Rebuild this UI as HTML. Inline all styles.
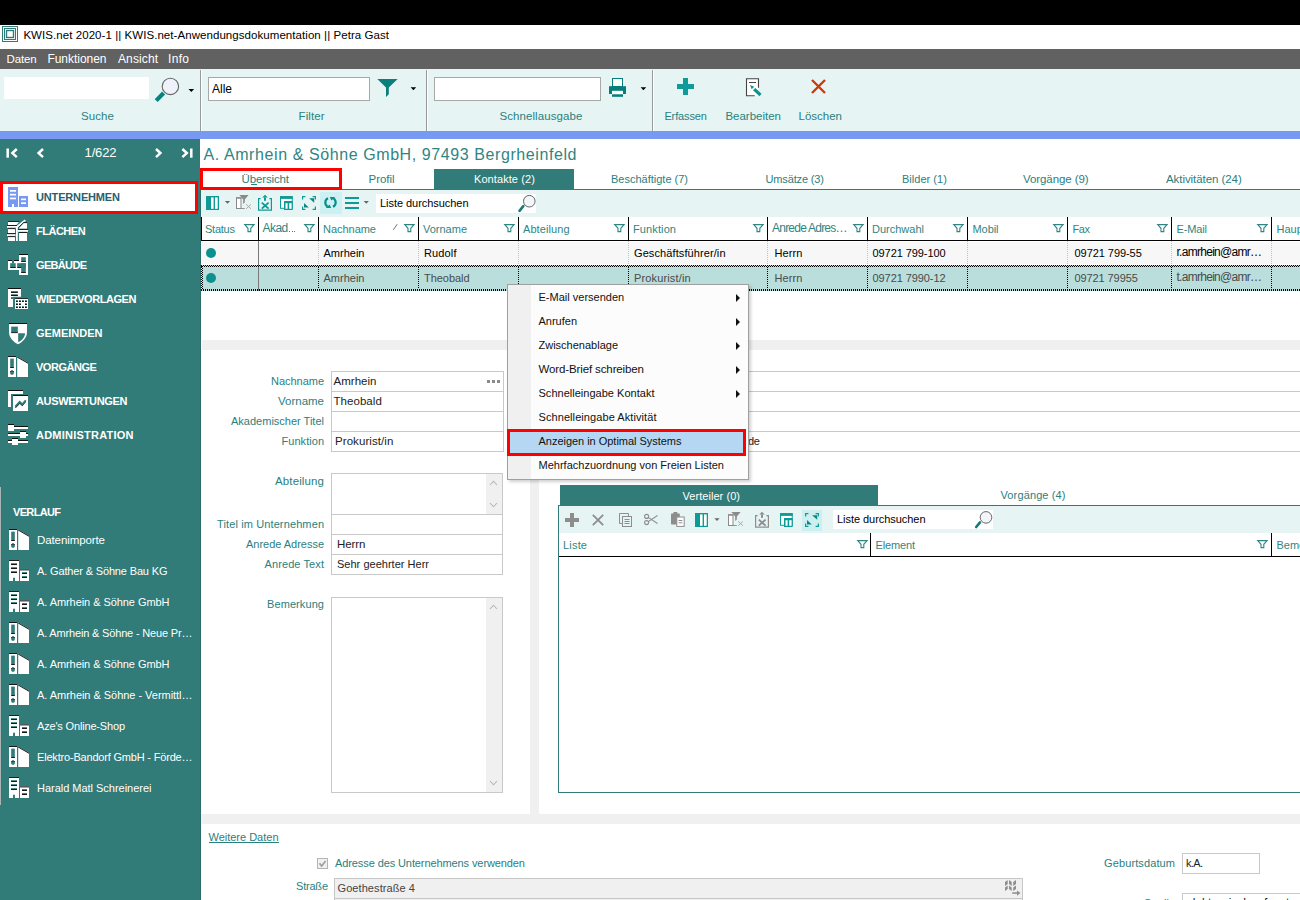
<!DOCTYPE html>
<html><head><meta charset="utf-8">
<style>
*{box-sizing:border-box;margin:0;padding:0}
html,body{width:1300px;height:900px;overflow:hidden;background:#fff}
body{font-family:"Liberation Sans",sans-serif;font-size:12px;color:#000;position:relative}
.a{position:absolute;white-space:nowrap}
.t{position:absolute;white-space:pre}
svg{overflow:visible}
</style></head><body>
<div class="a" style="left:0px;top:0px;width:1300px;height:25px;background:#000;"></div>
<div class="a" style="left:0px;top:25px;width:1300px;height:24px;background:#fff;"></div>
<svg class="a" style="left:2px;top:26px" width="16" height="16" viewBox="0 0 16 16"><rect x="0.5" y="0.5" width="15" height="15" fill="#fff" stroke="#317b78" stroke-width="1"/><rect x="2.5" y="2.5" width="11" height="11" fill="none" stroke="#317b78" stroke-width="1"/><rect x="4.5" y="4.5" width="7" height="7" fill="none" stroke="#317b78" stroke-width="1.4"/></svg>
<div class="t" style="left:23.4px;top:25px;font-size:11.5px;line-height:20px;color:#000;letter-spacing:0.062px;">KWIS.net 2020-1 || KWIS.net-Anwendungsdokumentation || Petra Gast</div>
<div class="a" style="left:0px;top:49px;width:1300px;height:20px;background:#616161;"></div>
<div class="t" style="left:6.5px;top:49px;font-size:11.5px;line-height:20px;color:#fff;letter-spacing:-0.149px;">Daten</div>
<div class="t" style="left:47.4px;top:49px;font-size:12px;line-height:20px;color:#fff;letter-spacing:-0.031px;">Funktionen</div>
<div class="t" style="left:118px;top:49px;font-size:12px;line-height:20px;color:#fff;letter-spacing:0.107px;">Ansicht</div>
<div class="t" style="left:168px;top:49px;font-size:12px;line-height:20px;color:#fff;letter-spacing:0.328px;">Info</div>
<div class="a" style="left:0px;top:69px;width:1300px;height:62px;background:#e6f5f4;"></div>
<div class="a" style="left:4px;top:77px;width:145px;height:22px;background:#fff;"></div>
<svg class="a" style="left:0px;top:0px" width="1" height="1" viewBox="0 0 1 1"><line x1="163.6" y1="93" x2="156.2" y2="100.6" stroke="#06837f" stroke-width="4.2" stroke-linecap="butt"/><circle cx="170.4" cy="86.4" r="8.2" fill="#eff2fa" stroke="#666" stroke-width="1.1"/></svg>
<svg class="a" style="left:0px;top:0px" width="1" height="1" viewBox="0 0 1 1"><path d="M188.5 88.89999999999999 h5.6 l-2.8 3 z" fill="#000"/></svg>
<div class="t" style="left:81px;top:106px;font-size:11.5px;line-height:20px;color:#2b807e;letter-spacing:0.097px;">Suche</div>
<div class="a" style="left:200px;top:70px;width:1px;height:61px;background:#9a9a9a;"></div>
<div class="a" style="left:201px;top:70px;width:1px;height:61px;background:#fff;"></div>
<div class="a" style="left:208px;top:77px;width:162px;height:24px;background:#fff;border:1px solid #a8a8a8;"></div>
<div class="t" style="left:212px;top:79px;font-size:12px;line-height:20px;color:#000;letter-spacing:-0.005px;">Alle</div>
<svg class="a" style="left:377px;top:79px" width="21" height="18" viewBox="0 0 21 18"><path d="M0.3 0 H20.7 L11.8 8.5 V15.3 L9 18 V8.5 Z" fill="#0b7f7c"/></svg>
<svg class="a" style="left:0px;top:0px" width="1" height="1" viewBox="0 0 1 1"><path d="M410.59999999999997 87.19999999999999 h5.6 l-2.8 3 z" fill="#000"/></svg>
<div class="t" style="left:298.6px;top:106px;font-size:11.5px;line-height:20px;color:#2b807e;letter-spacing:0.088px;">Filter</div>
<div class="a" style="left:426px;top:70px;width:1px;height:61px;background:#9a9a9a;"></div>
<div class="a" style="left:427px;top:70px;width:1px;height:61px;background:#fff;"></div>
<div class="a" style="left:434px;top:77px;width:167px;height:24px;background:#fff;border:1px solid #a8a8a8;"></div>
<svg class="a" style="left:609px;top:78px" width="17" height="19" viewBox="0 0 17 19"><rect x="3.5" y="0.5" width="10" height="8" fill="#fff" stroke="#067f7c" stroke-width="1"/><rect x="0" y="8.2" width="17" height="7.8" fill="#067f7c"/><rect x="3" y="12.8" width="11" height="3.4" fill="#fff"/><rect x="3" y="16.3" width="11" height="2.5" fill="#067f7c"/></svg>
<svg class="a" style="left:0px;top:0px" width="1" height="1" viewBox="0 0 1 1"><path d="M640.6 87.19999999999999 h5.6 l-2.8 3 z" fill="#000"/></svg>
<div class="t" style="left:499.4px;top:106px;font-size:11.5px;line-height:20px;color:#2b807e;letter-spacing:0.089px;">Schnellausgabe</div>
<div class="a" style="left:652px;top:70px;width:1px;height:61px;background:#9a9a9a;"></div>
<div class="a" style="left:653px;top:70px;width:1px;height:61px;background:#fff;"></div>
<svg class="a" style="left:677px;top:78px" width="17" height="17" viewBox="0 0 17 17"><path d="M6 0 h5 v6 h6 v5 h-6 v6 h-5 v-6 h-6 v-5 h6 z" fill="#0f9b97"/></svg>
<div class="t" style="left:664.4px;top:106px;font-size:11px;line-height:20px;color:#2b807e;letter-spacing:-0.116px;">Erfassen</div>
<svg class="a" style="left:745px;top:77px" width="18" height="20" viewBox="0 0 18 20"><rect x="1.5" y="1.7" width="12" height="17" fill="#fff"/><path d="M13.5 10.7 V1.7 H1.5 V18.7 H9.7" fill="none" stroke="#444" stroke-width="1.1"/><path d="M4 5.5 H11" stroke="#444" stroke-width="1"/><path d="M5 8 L9.2 9.7 L6.7 12.3 Z" fill="#0a9490"/><path d="M10.3 11 L8 13.3 L14.5 19.2 L16.5 16.7 Z" fill="#0a9490"/></svg>
<div class="t" style="left:725.4px;top:106px;font-size:11.5px;line-height:20px;color:#2b807e;letter-spacing:-0.003px;">Bearbeiten</div>
<svg class="a" style="left:811px;top:79px" width="15" height="15" viewBox="0 0 15 15"><path d="M1 1 L14 14 M14 1 L1 14" stroke="#cc3a0a" stroke-width="2.4" stroke-linecap="butt"/></svg>
<div class="t" style="left:798.6px;top:106px;font-size:11.5px;line-height:20px;color:#2b807e;letter-spacing:-0.014px;">Löschen</div>
<div class="a" style="left:0px;top:131px;width:1300px;height:8px;background:#7799f1;"></div>
<div class="a" style="left:0px;top:139px;width:200px;height:761px;background:#317b78;"></div>
<svg class="a" style="left:0px;top:139px" width="200" height="30" viewBox="0 0 200 30"><g stroke="#fff" stroke-width="2.5" fill="none" stroke-linecap="butt" stroke-linejoin="miter">
<path d="M7.7 9.5 V18.7"/><path d="M16.8 10 L12.4 14.1 L16.8 18.2"/>
<path d="M43 10 L38.6 14.1 L43 18.2"/>
<path d="M156 10 L160.4 14.1 L156 18.2"/>
<path d="M182.4 10 L186.8 14.1 L182.4 18.2"/><path d="M191.3 9.5 V18.7"/></g></svg>
<div class="t" style="left:84.6px;top:143px;font-size:13px;line-height:20px;color:#fff;letter-spacing:-0.162px;">1/622</div>
<div class="a" style="left:0px;top:181px;width:198px;height:33px;background:#fff;border:3px solid #ff0000;"></div>
<svg class="a" style="left:8px;top:187px" width="20" height="20" viewBox="0 0 20 20" preserveAspectRatio="none"><path d="M0 0 H10 V20 H6 V17 H4 V20 H0 Z M11 9 H20 V20 H11 Z" fill="#7799f1"/><g fill="#fff"><rect x="2" y="3" width="6" height="1.7"/><rect x="2" y="6.8" width="6" height="1.7"/><rect x="2" y="10.6" width="6" height="1.7"/><rect x="13" y="11.5" width="5" height="1.7"/><rect x="13" y="15.3" width="5" height="1.7"/></g></svg>
<div class="t" style="left:36px;top:187px;font-size:11px;line-height:20px;color:#29606c;font-weight:bold;letter-spacing:-0.156px;">UNTERNEHMEN</div>
<svg class="a" style="left:7px;top:220px" width="21" height="21" viewBox="0 0 21 21"><g fill="#fff"><path d="M1 1.4 H12.3 L9.5 5 H1 Z"/><rect x="0" y="5.9" width="10.3" height="1.8"/><rect x="1" y="8.6" width="7" height="4.6"/><rect x="0" y="14.1" width="8.5" height="1.8"/><rect x="1" y="16.6" width="7" height="4.4"/><rect x="9" y="7" width="1.8" height="14"/><path d="M12 8.8 V8 L17 2.8 H20 V8.8 Z"/><rect x="11" y="10" width="10" height="1.8"/><rect x="12" y="12.8" width="8" height="8.2"/></g><path d="M9.8 7 L18.3 0.2" stroke="#fff" stroke-width="1.9" fill="none"/><g fill="#111"><rect x="1" y="1" width="11.3" height="0.9"/><rect x="0" y="5" width="10" height="0.9"/><rect x="1" y="8.2" width="7" height="0.9"/><rect x="0" y="13.2" width="8.5" height="0.9"/><rect x="1" y="16.2" width="7" height="0.9"/><rect x="17" y="2.2" width="3" height="0.9"/><rect x="11.2" y="8.9" width="9.6" height="0.9"/><rect x="12" y="12" width="8" height="0.9"/></g><path d="M11.7 7.4 L17.2 2" stroke="#111" stroke-width="0.9" fill="none"/></svg>
<div class="t" style="left:36px;top:221px;font-size:11px;line-height:20px;color:#fff;font-weight:bold;letter-spacing:-0.494px;">FLÄCHEN</div>
<svg class="a" style="left:8px;top:254px" width="20" height="21" viewBox="0 0 20 21"><path d="M11 0 H20 V21 H11 V16 H0 V6 H11 Z" fill="#fff"/><g fill="#317b78"><rect x="4" y="6" width="2" height="3.4"/><rect x="13.2" y="3.2" width="4.6" height="4.6"/><rect x="2.2" y="9.2" width="5.5" height="4.6"/><rect x="9.2" y="9.2" width="8.6" height="4.6"/><rect x="13.2" y="9.2" width="4.6" height="9.6"/></g><g fill="#111"><rect x="11" y="0" width="9" height="1"/><rect x="0" y="6" width="4" height="1"/><rect x="6" y="6" width="5" height="1"/><rect x="13.2" y="7" width="4.6" height="0.9"/><rect x="2.2" y="13" width="5.5" height="0.9"/><rect x="9.2" y="13" width="4" height="0.9"/><rect x="13.2" y="18" width="4.6" height="0.9"/></g></svg>
<div class="t" style="left:36px;top:255px;font-size:11px;line-height:20px;color:#fff;font-weight:bold;letter-spacing:-0.669px;">GEBÄUDE</div>
<svg class="a" style="left:8px;top:288px" width="20" height="21" viewBox="0 0 20 21"><path d="M0 0 H13 V8.8 H5 V19 H0 Z" fill="#fff"/><rect x="7" y="10" width="13" height="11" fill="#fff"/><g fill="#317b78"><rect x="3" y="3.2" width="6.8" height="1.7"/><rect x="3" y="6.3" width="6.8" height="1.7"/><rect x="8" y="12.2" width="1.8" height="1.8"/><rect x="8" y="15.2" width="1.8" height="1.8"/><rect x="8" y="18.2" width="1.8" height="1.8"/><rect x="11" y="12.2" width="1.8" height="1.8"/><rect x="11" y="15.2" width="1.8" height="1.8"/><rect x="11" y="18.2" width="1.8" height="1.8"/><rect x="14" y="12.2" width="1.8" height="1.8"/><rect x="14" y="18.2" width="1.8" height="1.8"/><rect x="17" y="12.2" width="1.8" height="1.8"/><rect x="17" y="15.2" width="1.8" height="1.8"/><rect x="17" y="18.2" width="1.8" height="1.8"/></g><g fill="#111"><rect x="0" y="0" width="13" height="1"/><rect x="7" y="10" width="13" height="0.9"/><rect x="3" y="3.8" width="6.8" height="1.1"/><rect x="3" y="6.9" width="6.8" height="1.1"/><rect x="3" y="9.4" width="2" height="1.3"/><rect x="8" y="12.9" width="1.8" height="1.1"/><rect x="8" y="15.9" width="1.8" height="1.1"/><rect x="8" y="18.9" width="1.8" height="1.1"/><rect x="11" y="12.9" width="1.8" height="1.1"/><rect x="11" y="15.9" width="1.8" height="1.1"/><rect x="11" y="18.9" width="1.8" height="1.1"/><rect x="14" y="12.9" width="1.8" height="1.1"/><rect x="14" y="18.9" width="1.8" height="1.1"/><rect x="17" y="12.9" width="1.8" height="1.1"/><rect x="17" y="15.9" width="1.8" height="1.1"/><rect x="17" y="18.9" width="1.8" height="1.1"/></g></svg>
<div class="t" style="left:36px;top:289px;font-size:11px;line-height:20px;color:#fff;font-weight:bold;letter-spacing:-0.442px;">WIEDERVORLAGEN</div>
<svg class="a" style="left:9px;top:323px" width="18" height="22" viewBox="0 0 18 22"><path d="M0 0.5 H18 V9 C18 15 13 19.3 9 21.3 C5 19.3 0 15 0 9 Z" fill="#fff"/><rect x="0" y="0" width="18" height="1" fill="#111"/><rect x="2.2" y="3.6" width="6.6" height="6" fill="#317b78"/><rect x="2.2" y="9.2" width="6.6" height="0.9" fill="#111"/><path d="M9.2 10.2 H16 C16 14 13 17.5 9.2 19.2 Z" fill="#317b78"/></svg>
<div class="t" style="left:36px;top:323px;font-size:11px;line-height:20px;color:#fff;font-weight:bold;letter-spacing:-0.016px;">GEMEINDEN</div>
<svg class="a" style="left:8px;top:356px" width="20" height="21" viewBox="0 0 20 20" preserveAspectRatio="none"><path d="M0 0.5 H8 V20 H0 Z M9.2 0.5 L20 6.5 V20 H9.2 Z" fill="#fff"/><rect x="0" y="0" width="8" height="0.9" fill="#111"/><path d="M9.2 0.5 L20 6.5 L20 7.4 L9.2 1.4 Z" fill="#111"/><rect x="2.2" y="2.5" width="3.6" height="8.5" fill="#317b78"/><rect x="2.2" y="10.5" width="3.6" height="0.9" fill="#111"/><circle cx="4" cy="16" r="2" fill="#317b78"/><path d="M2.2 15.2 A2 2 0 0 1 5.8 15.2" fill="none" stroke="#111" stroke-width="0.8"/></svg>
<div class="t" style="left:36px;top:357px;font-size:11px;line-height:20px;color:#fff;font-weight:bold;letter-spacing:-0.484px;">VORGÄNGE</div>
<svg class="a" style="left:8px;top:390px" width="20" height="21" viewBox="0 0 20 21"><path d="M0 0 H15 V4 H3 V17 H0 Z" fill="#fff"/><rect x="5" y="5" width="15" height="16" fill="#fff"/><g fill="#111"><rect x="0" y="0" width="15" height="1"/><rect x="5" y="5" width="15" height="1"/></g><path d="M7.4 17.6 L11.7 13 L14.3 15.4 L17.7 11.4" fill="none" stroke="#222" stroke-width="1.2"/><path d="M7.2 16.5 L11.7 11.8 L14.3 14.3 L17.7 10.2" fill="none" stroke="#317b78" stroke-width="1.8"/></svg>
<div class="t" style="left:36px;top:391px;font-size:11px;line-height:20px;color:#fff;font-weight:bold;letter-spacing:-0.359px;">AUSWERTUNGEN</div>
<svg class="a" style="left:8px;top:424px" width="20" height="21" viewBox="0 0 20 21"><g fill="#fff"><rect x="0" y="0" width="6" height="7"/><rect x="6" y="2" width="14" height="3"/><rect x="12" y="7" width="6" height="7"/><rect x="0" y="9" width="20" height="3"/><rect x="4" y="14" width="6" height="7"/><rect x="0" y="16" width="20" height="3"/></g><g fill="#111"><rect x="0" y="0" width="6" height="1"/><rect x="6" y="2" width="14" height="1"/><rect x="12" y="7" width="6" height="1"/><rect x="0" y="9" width="12" height="1"/><rect x="18" y="9" width="2" height="1"/><rect x="4" y="14" width="6" height="1"/><rect x="0" y="16" width="4" height="1"/><rect x="10" y="16" width="10" height="1"/></g></svg>
<div class="t" style="left:36px;top:425px;font-size:11px;line-height:20px;color:#fff;font-weight:bold;letter-spacing:0.230px;">ADMINISTRATION</div>
<div class="a" style="left:0px;top:487px;width:1px;height:318px;background:#a9b4b4;"></div>
<div class="t" style="left:13px;top:502px;font-size:11px;line-height:20px;color:#fff;font-weight:bold;letter-spacing:-0.659px;">VERLAUF</div>
<svg class="a" style="left:9px;top:529px" width="20" height="21" viewBox="0 0 20 20" preserveAspectRatio="none"><path d="M0 0.5 H8 V20 H0 Z M9.2 0.5 L20 6.5 V20 H9.2 Z" fill="#fff"/><rect x="0" y="0" width="8" height="0.9" fill="#111"/><path d="M9.2 0.5 L20 6.5 L20 7.4 L9.2 1.4 Z" fill="#111"/><rect x="2.2" y="2.5" width="3.6" height="8.5" fill="#317b78"/><rect x="2.2" y="10.5" width="3.6" height="0.9" fill="#111"/><circle cx="4" cy="16" r="2" fill="#317b78"/><path d="M2.2 15.2 A2 2 0 0 1 5.8 15.2" fill="none" stroke="#111" stroke-width="0.8"/></svg>
<div class="t" style="left:37px;top:530px;font-size:11.5px;line-height:20px;color:#fff;letter-spacing:-0.095px;">Datenimporte</div>
<svg class="a" style="left:9px;top:560px" width="20" height="21" viewBox="0 0 20 20" preserveAspectRatio="none"><path d="M0 0 H10 V20 H6 V17 H4 V20 H0 Z M11 9 H20 V20 H11 Z" fill="#fff"/><g fill="#317b78"><rect x="2" y="3" width="6" height="1.7"/><rect x="2" y="6.8" width="6" height="1.7"/><rect x="2" y="10.6" width="6" height="1.7"/><rect x="13" y="11.5" width="5" height="1.7"/><rect x="13" y="15.3" width="5" height="1.7"/></g><g fill="#111"><rect x="0" y="0" width="10" height="0.9"/><rect x="11" y="9" width="9" height="0.9"/><rect x="2" y="3.9" width="6" height="0.9"/><rect x="2" y="7.7" width="6" height="0.9"/><rect x="2" y="11.5" width="6" height="0.9"/><rect x="13" y="12.4" width="5" height="0.9"/><rect x="13" y="16.2" width="5" height="0.9"/></g></svg>
<div class="t" style="left:37px;top:561px;font-size:11px;line-height:20px;color:#fff;letter-spacing:-0.149px;">A. Gather &amp; Söhne Bau KG</div>
<svg class="a" style="left:9px;top:591px" width="20" height="21" viewBox="0 0 20 20" preserveAspectRatio="none"><path d="M0 0 H10 V20 H6 V17 H4 V20 H0 Z M11 9 H20 V20 H11 Z" fill="#fff"/><g fill="#317b78"><rect x="2" y="3" width="6" height="1.7"/><rect x="2" y="6.8" width="6" height="1.7"/><rect x="2" y="10.6" width="6" height="1.7"/><rect x="13" y="11.5" width="5" height="1.7"/><rect x="13" y="15.3" width="5" height="1.7"/></g><g fill="#111"><rect x="0" y="0" width="10" height="0.9"/><rect x="11" y="9" width="9" height="0.9"/><rect x="2" y="3.9" width="6" height="0.9"/><rect x="2" y="7.7" width="6" height="0.9"/><rect x="2" y="11.5" width="6" height="0.9"/><rect x="13" y="12.4" width="5" height="0.9"/><rect x="13" y="16.2" width="5" height="0.9"/></g></svg>
<div class="t" style="left:37px;top:592px;font-size:11px;line-height:20px;color:#fff;letter-spacing:-0.064px;">A. Amrhein &amp; Söhne GmbH</div>
<svg class="a" style="left:9px;top:622px" width="20" height="21" viewBox="0 0 20 20" preserveAspectRatio="none"><path d="M0 0.5 H8 V20 H0 Z M9.2 0.5 L20 6.5 V20 H9.2 Z" fill="#fff"/><rect x="0" y="0" width="8" height="0.9" fill="#111"/><path d="M9.2 0.5 L20 6.5 L20 7.4 L9.2 1.4 Z" fill="#111"/><rect x="2.2" y="2.5" width="3.6" height="8.5" fill="#317b78"/><rect x="2.2" y="10.5" width="3.6" height="0.9" fill="#111"/><circle cx="4" cy="16" r="2" fill="#317b78"/><path d="M2.2 15.2 A2 2 0 0 1 5.8 15.2" fill="none" stroke="#111" stroke-width="0.8"/></svg>
<div class="t" style="left:37px;top:623px;font-size:11px;line-height:20px;color:#fff;letter-spacing:-0.167px;">A. Amrhein &amp; Söhne - Neue Pr…</div>
<svg class="a" style="left:9px;top:653px" width="20" height="21" viewBox="0 0 20 20" preserveAspectRatio="none"><path d="M0 0.5 H8 V20 H0 Z M9.2 0.5 L20 6.5 V20 H9.2 Z" fill="#fff"/><rect x="0" y="0" width="8" height="0.9" fill="#111"/><path d="M9.2 0.5 L20 6.5 L20 7.4 L9.2 1.4 Z" fill="#111"/><rect x="2.2" y="2.5" width="3.6" height="8.5" fill="#317b78"/><rect x="2.2" y="10.5" width="3.6" height="0.9" fill="#111"/><circle cx="4" cy="16" r="2" fill="#317b78"/><path d="M2.2 15.2 A2 2 0 0 1 5.8 15.2" fill="none" stroke="#111" stroke-width="0.8"/></svg>
<div class="t" style="left:37px;top:654px;font-size:11px;line-height:20px;color:#fff;letter-spacing:-0.064px;">A. Amrhein &amp; Söhne GmbH</div>
<svg class="a" style="left:9px;top:684px" width="20" height="21" viewBox="0 0 20 20" preserveAspectRatio="none"><path d="M0 0.5 H8 V20 H0 Z M9.2 0.5 L20 6.5 V20 H9.2 Z" fill="#fff"/><rect x="0" y="0" width="8" height="0.9" fill="#111"/><path d="M9.2 0.5 L20 6.5 L20 7.4 L9.2 1.4 Z" fill="#111"/><rect x="2.2" y="2.5" width="3.6" height="8.5" fill="#317b78"/><rect x="2.2" y="10.5" width="3.6" height="0.9" fill="#111"/><circle cx="4" cy="16" r="2" fill="#317b78"/><path d="M2.2 15.2 A2 2 0 0 1 5.8 15.2" fill="none" stroke="#111" stroke-width="0.8"/></svg>
<div class="t" style="left:37px;top:685px;font-size:11px;line-height:20px;color:#fff;letter-spacing:-0.035px;">A. Amrhein &amp; Söhne - Vermittl…</div>
<svg class="a" style="left:9px;top:715px" width="20" height="21" viewBox="0 0 20 20" preserveAspectRatio="none"><path d="M0 0 H10 V20 H6 V17 H4 V20 H0 Z M11 9 H20 V20 H11 Z" fill="#fff"/><g fill="#317b78"><rect x="2" y="3" width="6" height="1.7"/><rect x="2" y="6.8" width="6" height="1.7"/><rect x="2" y="10.6" width="6" height="1.7"/><rect x="13" y="11.5" width="5" height="1.7"/><rect x="13" y="15.3" width="5" height="1.7"/></g><g fill="#111"><rect x="0" y="0" width="10" height="0.9"/><rect x="11" y="9" width="9" height="0.9"/><rect x="2" y="3.9" width="6" height="0.9"/><rect x="2" y="7.7" width="6" height="0.9"/><rect x="2" y="11.5" width="6" height="0.9"/><rect x="13" y="12.4" width="5" height="0.9"/><rect x="13" y="16.2" width="5" height="0.9"/></g></svg>
<div class="t" style="left:37px;top:716px;font-size:11px;line-height:20px;color:#fff;letter-spacing:-0.173px;">Aze's Online-Shop</div>
<svg class="a" style="left:9px;top:746px" width="20" height="21" viewBox="0 0 20 20" preserveAspectRatio="none"><path d="M0 0.5 H8 V20 H0 Z M9.2 0.5 L20 6.5 V20 H9.2 Z" fill="#fff"/><rect x="0" y="0" width="8" height="0.9" fill="#111"/><path d="M9.2 0.5 L20 6.5 L20 7.4 L9.2 1.4 Z" fill="#111"/><rect x="2.2" y="2.5" width="3.6" height="8.5" fill="#317b78"/><rect x="2.2" y="10.5" width="3.6" height="0.9" fill="#111"/><circle cx="4" cy="16" r="2" fill="#317b78"/><path d="M2.2 15.2 A2 2 0 0 1 5.8 15.2" fill="none" stroke="#111" stroke-width="0.8"/></svg>
<div class="t" style="left:37px;top:747px;font-size:11px;line-height:20px;color:#fff;letter-spacing:-0.188px;">Elektro-Bandorf GmbH - Förde…</div>
<svg class="a" style="left:9px;top:777px" width="20" height="21" viewBox="0 0 20 20" preserveAspectRatio="none"><path d="M0 0 H10 V20 H6 V17 H4 V20 H0 Z M11 9 H20 V20 H11 Z" fill="#fff"/><g fill="#317b78"><rect x="2" y="3" width="6" height="1.7"/><rect x="2" y="6.8" width="6" height="1.7"/><rect x="2" y="10.6" width="6" height="1.7"/><rect x="13" y="11.5" width="5" height="1.7"/><rect x="13" y="15.3" width="5" height="1.7"/></g><g fill="#111"><rect x="0" y="0" width="10" height="0.9"/><rect x="11" y="9" width="9" height="0.9"/><rect x="2" y="3.9" width="6" height="0.9"/><rect x="2" y="7.7" width="6" height="0.9"/><rect x="2" y="11.5" width="6" height="0.9"/><rect x="13" y="12.4" width="5" height="0.9"/><rect x="13" y="16.2" width="5" height="0.9"/></g></svg>
<div class="t" style="left:37px;top:778px;font-size:11px;line-height:20px;color:#fff;letter-spacing:-0.020px;">Harald Matl Schreinerei</div>
<div class="t" style="left:203.5px;top:145px;font-size:16px;line-height:20px;color:#2f8583;letter-spacing:0.587px;">A. Amrhein &amp; Söhne GmbH, 97493 Bergrheinfeld</div>
<div class="a" style="left:342px;top:189px;width:958px;height:1px;background:#317b78;"></div>
<div class="a" style="left:200px;top:168px;width:142px;height:22px;background:#fff;border:3px solid #ff0000;"></div>
<div class="t" style="left:241.5px;top:169px;font-size:11.5px;line-height:20px;color:#2b807e;letter-spacing:-0.134px;">Übersicht</div>
<div class="a" style="left:250.5px;top:184px;width:6.5px;height:1px;background:#2b807e;"></div>
<div class="t" style="left:368.5px;top:169px;font-size:11.5px;line-height:20px;color:#2b807e;letter-spacing:-0.041px;">Profil</div>
<div class="a" style="left:434px;top:169px;width:140px;height:21px;background:#317b78;"></div>
<div class="t" style="left:474px;top:169px;font-size:11px;line-height:20px;color:#fff;letter-spacing:0.079px;">Kontakte (2)</div>
<div class="t" style="left:611px;top:169px;font-size:11px;line-height:20px;color:#2b807e;letter-spacing:-0.003px;">Beschäftigte (7)</div>
<div class="t" style="left:765.5px;top:169px;font-size:11px;line-height:20px;color:#2b807e;letter-spacing:-0.140px;">Umsätze (3)</div>
<div class="t" style="left:902px;top:169px;font-size:11px;line-height:20px;color:#2b807e;letter-spacing:0.019px;">Bilder (1)</div>
<div class="t" style="left:1023px;top:169px;font-size:11.5px;line-height:20px;color:#2b807e;letter-spacing:-0.082px;">Vorgänge (9)</div>
<div class="t" style="left:1166px;top:169px;font-size:11.5px;line-height:20px;color:#2b807e;letter-spacing:-0.061px;">Aktivitäten (24)</div>
<div class="a" style="left:200px;top:190px;width:1px;height:710px;background:#2a6d6a;"></div>
<div class="a" style="left:201px;top:190px;width:1099px;height:27px;background:#e6f5f4;"></div>
<svg class="a" style="left:206px;top:196px" width="13" height="14" viewBox="0 0 13 14"><rect x="0" y="0" width="13" height="14" fill="#0e9a96"/><rect x="5" y="1.4" width="2.6" height="11.4" fill="#fff"/><rect x="9" y="1.4" width="2.7" height="11.4" fill="#fff"/></svg>
<svg class="a" style="left:0px;top:0px" width="1" height="1" viewBox="0 0 1 1"><path d="M224.9 200.89999999999998 h5.2 l-2.6 2.8 z" fill="#666"/></svg>
<svg class="a" style="left:236px;top:195px" width="16" height="14" viewBox="0 0 16 14"><rect x="0.5" y="2.8" width="4.5" height="10.7" fill="#fff" stroke="#8a8a8a" stroke-width="1"/><rect x="0" y="2.3" width="5.5" height="1.3" fill="#8a8a8a"/><rect x="0" y="13" width="8.8" height="0.9" fill="#8a8a8a"/><path d="M3.4 0 H12.6 L8.8 4.5 V7.5 L7.2 9 V4.5 Z" fill="#8a8a8a"/><path d="M10.2 9.3 L15 13.8 M15 9.3 L10.2 13.8" stroke="#ab9f9f" stroke-width="0.9"/></svg>
<svg class="a" style="left:258px;top:196px" width="14" height="15" viewBox="0 0 14 15"><path d="M2.6 2.6 H0.6 V14.1 H13.4 V2.6 H11.4" fill="none" stroke="#0e9a96" stroke-width="1.2"/><path d="M7 -1.2 L9.8 1.6 H4.2 Z" fill="#0e9a96"/><rect x="6" y="1.4" width="2" height="3.4" fill="#0e9a96"/><path d="M3.8 6.6 L10.6 12.6 M10.6 6.6 L3.8 12.6" stroke="#0e9a96" stroke-width="1.9"/></svg>
<svg class="a" style="left:280px;top:196px" width="13" height="14" viewBox="0 0 13 14"><rect x="0.5" y="0.7" width="11.7" height="11.6" fill="#fff" stroke="#0e9a96" stroke-width="1"/><rect x="0" y="0.2" width="12.7" height="2.7" fill="#0e9a96"/><rect x="4" y="5" width="8.7" height="9" fill="#0e9a96"/><rect x="5.5" y="7.2" width="2.1" height="5.6" fill="#fff"/><rect x="9.2" y="7.2" width="2.4" height="5.6" fill="#fff"/></svg>
<svg class="a" style="left:302px;top:196px" width="14" height="14" viewBox="0 0 14 14"><g fill="none" stroke="#0e9a96" stroke-width="1.2"><path d="M0.6 3.4 V0.6 H3.4"/><path d="M10.6 0.6 H13.4 V3.4"/><path d="M13.4 10.6 V13.4 H10.6"/><path d="M3.4 13.4 H0.6 V10.6"/></g><path d="M7.1 2.3 H12.2 V6.8 Z M2 7.1 V11.6 H6.8 Z" fill="#0a8783"/></svg>
<div class="a" style="left:320px;top:192px;width:22px;height:22px;background:#cdf0f2;"></div>
<svg class="a" style="left:0px;top:0px" width="1" height="1" viewBox="0 0 1 1"><g fill="none" stroke="#0a8f8b" stroke-width="2.2"><path d="M328 198.2 C324.6 199.8 324.4 204.6 327.6 206.6"/><path d="M333 206.8 C336.4 205.2 336.6 200.4 333.4 198.4"/></g><path d="M325.8 208 H331.2 L329.6 204.4 Z M335.2 197 H329.8 L331.4 200.6 Z" fill="#0a8f8b"/></svg>
<div class="a" style="left:345px;top:197px;width:14px;height:2px;background:#0e9a96;"></div>
<div class="a" style="left:345px;top:202px;width:14px;height:2px;background:#0e9a96;"></div>
<div class="a" style="left:345px;top:207px;width:14px;height:2px;background:#0e9a96;"></div>
<svg class="a" style="left:0px;top:0px" width="1" height="1" viewBox="0 0 1 1"><path d="M363.7 200.89999999999998 h5.2 l-2.6 2.8 z" fill="#666"/></svg>
<div class="a" style="left:376px;top:194px;width:160px;height:19px;background:#fff;"></div>
<div class="t" style="left:380px;top:193px;font-size:11px;line-height:20px;color:#000;letter-spacing:-0.049px;">Liste durchsuchen</div>
<svg class="a" style="left:0px;top:0px" width="1" height="1" viewBox="0 0 1 1"><line x1="523.3" y1="206.2" x2="519.5" y2="210.79999999999998" stroke="#157a78" stroke-width="2.6" stroke-linecap="round"/><circle cx="529.3" cy="201.2" r="5.8" fill="#f2f5fa" stroke="#666" stroke-width="1"/></svg>
<div class="a" style="left:201px;top:217px;width:1099px;height:24px;background:#fff;"></div>
<div class="a" style="left:201px;top:240px;width:1099px;height:1px;background:#000;"></div>
<div class="a" style="left:201px;top:217px;width:1px;height:24px;background:#000;"></div>
<div class="a" style="left:258px;top:217px;width:1px;height:24px;background:#000;"></div>
<div class="a" style="left:318px;top:217px;width:1px;height:24px;background:#000;"></div>
<div class="a" style="left:418px;top:217px;width:1px;height:24px;background:#000;"></div>
<div class="a" style="left:518px;top:217px;width:1px;height:24px;background:#000;"></div>
<div class="a" style="left:628px;top:217px;width:1px;height:24px;background:#000;"></div>
<div class="a" style="left:767px;top:217px;width:1px;height:24px;background:#000;"></div>
<div class="a" style="left:867px;top:217px;width:1px;height:24px;background:#000;"></div>
<div class="a" style="left:967px;top:217px;width:1px;height:24px;background:#000;"></div>
<div class="a" style="left:1067px;top:217px;width:1px;height:24px;background:#000;"></div>
<div class="a" style="left:1171px;top:217px;width:1px;height:24px;background:#000;"></div>
<div class="a" style="left:1271px;top:217px;width:1px;height:24px;background:#000;"></div>
<svg class="a" style="left:244px;top:223.7px" width="11" height="8" viewBox="0 0 11 8"><path d="M0.7 0.6 H10.1 L6.8 4.3 V7.6 H4 V4.3 Z" fill="none" stroke="#2f8583" stroke-width="1.1" stroke-linejoin="miter"/></svg>
<svg class="a" style="left:304px;top:223.7px" width="11" height="8" viewBox="0 0 11 8"><path d="M0.7 0.6 H10.1 L6.8 4.3 V7.6 H4 V4.3 Z" fill="none" stroke="#2f8583" stroke-width="1.1" stroke-linejoin="miter"/></svg>
<svg class="a" style="left:404px;top:223.7px" width="11" height="8" viewBox="0 0 11 8"><path d="M0.7 0.6 H10.1 L6.8 4.3 V7.6 H4 V4.3 Z" fill="none" stroke="#2f8583" stroke-width="1.1" stroke-linejoin="miter"/></svg>
<svg class="a" style="left:504px;top:223.7px" width="11" height="8" viewBox="0 0 11 8"><path d="M0.7 0.6 H10.1 L6.8 4.3 V7.6 H4 V4.3 Z" fill="none" stroke="#2f8583" stroke-width="1.1" stroke-linejoin="miter"/></svg>
<svg class="a" style="left:614px;top:223.7px" width="11" height="8" viewBox="0 0 11 8"><path d="M0.7 0.6 H10.1 L6.8 4.3 V7.6 H4 V4.3 Z" fill="none" stroke="#2f8583" stroke-width="1.1" stroke-linejoin="miter"/></svg>
<svg class="a" style="left:753px;top:223.7px" width="11" height="8" viewBox="0 0 11 8"><path d="M0.7 0.6 H10.1 L6.8 4.3 V7.6 H4 V4.3 Z" fill="none" stroke="#2f8583" stroke-width="1.1" stroke-linejoin="miter"/></svg>
<svg class="a" style="left:853px;top:223.7px" width="11" height="8" viewBox="0 0 11 8"><path d="M0.7 0.6 H10.1 L6.8 4.3 V7.6 H4 V4.3 Z" fill="none" stroke="#2f8583" stroke-width="1.1" stroke-linejoin="miter"/></svg>
<svg class="a" style="left:953px;top:223.7px" width="11" height="8" viewBox="0 0 11 8"><path d="M0.7 0.6 H10.1 L6.8 4.3 V7.6 H4 V4.3 Z" fill="none" stroke="#2f8583" stroke-width="1.1" stroke-linejoin="miter"/></svg>
<svg class="a" style="left:1053px;top:223.7px" width="11" height="8" viewBox="0 0 11 8"><path d="M0.7 0.6 H10.1 L6.8 4.3 V7.6 H4 V4.3 Z" fill="none" stroke="#2f8583" stroke-width="1.1" stroke-linejoin="miter"/></svg>
<svg class="a" style="left:1157px;top:223.7px" width="11" height="8" viewBox="0 0 11 8"><path d="M0.7 0.6 H10.1 L6.8 4.3 V7.6 H4 V4.3 Z" fill="none" stroke="#2f8583" stroke-width="1.1" stroke-linejoin="miter"/></svg>
<svg class="a" style="left:1257px;top:223.7px" width="11" height="8" viewBox="0 0 11 8"><path d="M0.7 0.6 H10.1 L6.8 4.3 V7.6 H4 V4.3 Z" fill="none" stroke="#2f8583" stroke-width="1.1" stroke-linejoin="miter"/></svg>
<div class="t" style="left:205px;top:219px;font-size:11px;line-height:20px;color:#2f8583;letter-spacing:-0.237px;">Status</div>
<div class="t" style="left:262.5px;top:218px;font-size:12px;line-height:20px;color:#2f8583;letter-spacing:-0.553px;">Akad</div>
<div class="t" style="left:323px;top:219px;font-size:11px;line-height:20px;color:#2f8583;letter-spacing:-0.029px;">Nachname</div>
<div class="t" style="left:423px;top:219px;font-size:11px;line-height:20px;color:#2f8583;letter-spacing:-0.005px;">Vorname</div>
<div class="t" style="left:523px;top:219px;font-size:11px;line-height:20px;color:#2f8583;letter-spacing:0.078px;">Abteilung</div>
<div class="t" style="left:633px;top:219px;font-size:11px;line-height:20px;color:#2f8583;letter-spacing:0.114px;">Funktion</div>
<div class="t" style="left:772px;top:218px;font-size:12px;line-height:20px;color:#2f8583;letter-spacing:-0.768px;">Anrede Adres…</div>
<div class="t" style="left:872px;top:219px;font-size:11px;line-height:20px;color:#2f8583;letter-spacing:0.004px;">Durchwahl</div>
<div class="t" style="left:972.5px;top:219px;font-size:11px;line-height:20px;color:#2f8583;letter-spacing:-0.074px;">Mobil</div>
<div class="t" style="left:1072.5px;top:219px;font-size:11px;line-height:20px;color:#2f8583;letter-spacing:-0.422px;">Fax</div>
<div class="t" style="left:1176.5px;top:219px;font-size:11px;line-height:20px;color:#2f8583;letter-spacing:-0.134px;">E-Mail</div>
<div class="t" style="left:1276.5px;top:219px;font-size:11px;line-height:20px;color:#2f8583;">Haupt</div>
<div class="a" style="left:289px;top:231px;width:1.2px;height:1px;background:#2f8583;"></div>
<div class="a" style="left:291.5px;top:231px;width:1.2px;height:1px;background:#2f8583;"></div>
<div class="a" style="left:294px;top:231px;width:1.2px;height:1px;background:#2f8583;"></div>
<svg class="a" style="left:393px;top:224px" width="5" height="6" viewBox="0 0 5 6"><path d="M0.3 5.8 L4.2 0.2" stroke="#777" stroke-width="1"/></svg>
<div class="a" style="left:201px;top:242px;width:1099px;height:22px;background:#f7f7f7;"></div>
<div class="a" style="left:202px;top:265px;width:1098px;height:26px;background:#b9dedb;"></div>
<div class="a" style="left:258px;top:241px;width:1px;height:50px;background:#7a7a7a;"></div>
<div class="a" style="left:318px;top:241px;width:1px;height:24px;background:repeating-linear-gradient(180deg,#c0c0c0 0 1px,transparent 1px 2px);background-position:0 0px"></div>
<div class="a" style="left:318px;top:267px;width:1px;height:22px;background:repeating-linear-gradient(180deg,#000 0 1px,transparent 1px 2px);background-position:0 0px"></div>
<div class="a" style="left:418px;top:241px;width:1px;height:24px;background:repeating-linear-gradient(180deg,#c0c0c0 0 1px,transparent 1px 2px);background-position:0 0px"></div>
<div class="a" style="left:418px;top:267px;width:1px;height:22px;background:repeating-linear-gradient(180deg,#000 0 1px,transparent 1px 2px);background-position:0 0px"></div>
<div class="a" style="left:518px;top:241px;width:1px;height:24px;background:repeating-linear-gradient(180deg,#c0c0c0 0 1px,transparent 1px 2px);background-position:0 0px"></div>
<div class="a" style="left:518px;top:267px;width:1px;height:22px;background:repeating-linear-gradient(180deg,#000 0 1px,transparent 1px 2px);background-position:0 0px"></div>
<div class="a" style="left:628px;top:241px;width:1px;height:24px;background:repeating-linear-gradient(180deg,#c0c0c0 0 1px,transparent 1px 2px);background-position:0 0px"></div>
<div class="a" style="left:628px;top:267px;width:1px;height:22px;background:repeating-linear-gradient(180deg,#000 0 1px,transparent 1px 2px);background-position:0 0px"></div>
<div class="a" style="left:767px;top:241px;width:1px;height:24px;background:repeating-linear-gradient(180deg,#c0c0c0 0 1px,transparent 1px 2px);background-position:0 0px"></div>
<div class="a" style="left:767px;top:267px;width:1px;height:22px;background:repeating-linear-gradient(180deg,#000 0 1px,transparent 1px 2px);background-position:0 0px"></div>
<div class="a" style="left:867px;top:241px;width:1px;height:24px;background:repeating-linear-gradient(180deg,#c0c0c0 0 1px,transparent 1px 2px);background-position:0 0px"></div>
<div class="a" style="left:867px;top:267px;width:1px;height:22px;background:repeating-linear-gradient(180deg,#000 0 1px,transparent 1px 2px);background-position:0 0px"></div>
<div class="a" style="left:967px;top:241px;width:1px;height:24px;background:repeating-linear-gradient(180deg,#c0c0c0 0 1px,transparent 1px 2px);background-position:0 0px"></div>
<div class="a" style="left:967px;top:267px;width:1px;height:22px;background:repeating-linear-gradient(180deg,#000 0 1px,transparent 1px 2px);background-position:0 0px"></div>
<div class="a" style="left:1067px;top:241px;width:1px;height:24px;background:repeating-linear-gradient(180deg,#c0c0c0 0 1px,transparent 1px 2px);background-position:0 0px"></div>
<div class="a" style="left:1067px;top:267px;width:1px;height:22px;background:repeating-linear-gradient(180deg,#000 0 1px,transparent 1px 2px);background-position:0 0px"></div>
<div class="a" style="left:1171px;top:241px;width:1px;height:24px;background:repeating-linear-gradient(180deg,#c0c0c0 0 1px,transparent 1px 2px);background-position:0 0px"></div>
<div class="a" style="left:1171px;top:267px;width:1px;height:22px;background:repeating-linear-gradient(180deg,#000 0 1px,transparent 1px 2px);background-position:0 0px"></div>
<div class="a" style="left:1271px;top:241px;width:1px;height:24px;background:repeating-linear-gradient(180deg,#c0c0c0 0 1px,transparent 1px 2px);background-position:0 0px"></div>
<div class="a" style="left:1271px;top:267px;width:1px;height:22px;background:repeating-linear-gradient(180deg,#000 0 1px,transparent 1px 2px);background-position:0 0px"></div>
<div class="a" style="left:201px;top:265px;width:1099px;height:1px;background:repeating-linear-gradient(90deg,#000 0 1px,transparent 1px 2px);background-position:0px 0"></div>
<div class="a" style="left:201px;top:266px;width:1099px;height:1px;background:repeating-linear-gradient(90deg,#000 0 1px,transparent 1px 2px);background-position:1px 0"></div>
<div class="a" style="left:201px;top:289px;width:306px;height:2px;background:repeating-linear-gradient(90deg,#000 0 1px,transparent 1px 2px);background-position:0px 0"></div>
<div class="a" style="left:749px;top:289px;width:551px;height:2px;background:repeating-linear-gradient(90deg,#000 0 1px,transparent 1px 2px);background-position:0px 0"></div>
<div class="a" style="left:201px;top:267px;width:1px;height:22px;background:repeating-linear-gradient(180deg,#000 0 1px,transparent 1px 2px);background-position:0 0px"></div>
<div class="a" style="left:202px;top:267px;width:1px;height:22px;background:repeating-linear-gradient(180deg,#000 0 1px,transparent 1px 2px);background-position:0 1px"></div>
<svg class="a" style="left:0px;top:0px" width="1" height="1" viewBox="0 0 1 1"><circle cx="211" cy="253" r="5" fill="#0d918e"/><circle cx="211" cy="278" r="5" fill="#0d918e"/></svg>
<div class="t" style="left:323.5px;top:243px;font-size:11px;line-height:20px;color:#000;letter-spacing:0.005px;">Amrhein</div>
<div class="t" style="left:424.0px;top:243px;font-size:11px;line-height:20px;color:#000;letter-spacing:0.141px;">Rudolf</div>
<div class="t" style="left:634.0px;top:243px;font-size:11px;line-height:20px;color:#000;letter-spacing:0.096px;">Geschäftsführer/in</div>
<div class="t" style="left:774.5px;top:243px;font-size:11px;line-height:20px;color:#000;letter-spacing:0.121px;">Herrn</div>
<div class="t" style="left:872.5px;top:243px;font-size:11px;line-height:20px;color:#000;letter-spacing:-0.076px;">09721 799-100</div>
<div class="t" style="left:1074.5px;top:243px;font-size:11px;line-height:20px;color:#000;letter-spacing:-0.055px;">09721 799-55</div>
<div class="t" style="left:1176.5px;top:242px;font-size:12px;line-height:20px;color:#000;letter-spacing:-0.721px;">r.amrhein@amr…</div>
<div class="t" style="left:323.5px;top:268px;font-size:11px;line-height:20px;color:#4a4a4a;letter-spacing:0.005px;">Amrhein</div>
<div class="t" style="left:424.0px;top:268px;font-size:11px;line-height:20px;color:#4a4a4a;letter-spacing:-0.039px;">Theobald</div>
<div class="t" style="left:634.0px;top:268px;font-size:11px;line-height:20px;color:#4a4a4a;letter-spacing:0.143px;">Prokurist/in</div>
<div class="t" style="left:774.5px;top:268px;font-size:11px;line-height:20px;color:#4a4a4a;letter-spacing:0.121px;">Herrn</div>
<div class="t" style="left:872.5px;top:268px;font-size:11px;line-height:20px;color:#4a4a4a;letter-spacing:-0.076px;">09721 7990-12</div>
<div class="t" style="left:1074.5px;top:268px;font-size:11px;line-height:20px;color:#4a4a4a;letter-spacing:-0.093px;">09721 79955</div>
<div class="t" style="left:1176.5px;top:267px;font-size:12px;line-height:20px;color:#4a4a4a;letter-spacing:-0.721px;">t.amrhein@amr…</div>
<div class="a" style="left:202px;top:340px;width:1098px;height:10px;background:#f0f0f0;"></div>
<div class="a" style="left:530px;top:350px;width:9px;height:464px;background:#f0f0f0;"></div>
<div class="a" style="left:201px;top:814px;width:1099px;height:10px;background:#f0f0f0;"></div>
<div class="a" style="left:331px;top:371px;width:173px;height:21px;background:#fff;border:1px solid #c9c9c9;"></div>
<div class="a" style="left:331px;top:391px;width:173px;height:21px;background:#fff;border:1px solid #c9c9c9;"></div>
<div class="a" style="left:331px;top:411px;width:173px;height:21px;background:#fff;border:1px solid #c9c9c9;"></div>
<div class="a" style="left:331px;top:431px;width:173px;height:21px;background:#fff;border:1px solid #c9c9c9;"></div>
<div class="t" style="left:271px;top:371px;font-size:11px;line-height:20px;color:#2b807e;letter-spacing:-0.028px;">Nachname</div>
<div class="t" style="left:278px;top:391px;font-size:11.5px;line-height:20px;color:#2b807e;letter-spacing:-0.005px;">Vorname</div>
<div class="t" style="left:231px;top:411px;font-size:11px;line-height:20px;color:#2b807e;letter-spacing:0.004px;">Akademischer Titel</div>
<div class="t" style="left:281.5px;top:431px;font-size:11px;line-height:20px;color:#2b807e;letter-spacing:0.044px;">Funktion</div>
<div class="t" style="left:333.5px;top:371px;font-size:11.5px;line-height:20px;color:#222;letter-spacing:0.029px;">Amrhein</div>
<div class="t" style="left:333.5px;top:391px;font-size:11.5px;line-height:20px;color:#222;letter-spacing:0.048px;">Theobald</div>
<div class="t" style="left:335px;top:431px;font-size:11.5px;line-height:20px;color:#222;letter-spacing:0.070px;">Prokurist/in</div>
<div class="a" style="left:487px;top:380px;width:3px;height:3px;background:#8a8a8a;"></div>
<div class="a" style="left:492px;top:380px;width:3px;height:3px;background:#8a8a8a;"></div>
<div class="a" style="left:497px;top:380px;width:3px;height:3px;background:#8a8a8a;"></div>
<div class="a" style="left:558px;top:371px;width:742px;height:1px;background:#c9c9c9;"></div>
<div class="a" style="left:558px;top:391px;width:742px;height:1px;background:#c9c9c9;"></div>
<div class="a" style="left:558px;top:411px;width:742px;height:1px;background:#c9c9c9;"></div>
<div class="a" style="left:558px;top:431px;width:742px;height:1px;background:#c9c9c9;"></div>
<div class="a" style="left:558px;top:451px;width:742px;height:1px;background:#c9c9c9;"></div>
<div class="t" style="left:748px;top:431px;font-size:11px;line-height:20px;color:#222;letter-spacing:-0.246px;">de</div>
<div class="a" style="left:331px;top:473px;width:172px;height:42px;background:#fff;border:1px solid #c9c9c9;"></div>
<div class="a" style="left:486px;top:474px;width:16px;height:40px;background:#f0f0f0;"></div>
<svg class="a" style="left:0px;top:0px" width="1" height="1" viewBox="0 0 1 1"><path d="M490.0 485 L493.5 481.2 L497.0 485" fill="none" stroke="#b5b5b5" stroke-width="1.1"/></svg>
<svg class="a" style="left:0px;top:0px" width="1" height="1" viewBox="0 0 1 1"><path d="M490.0 503 L493.5 506.8 L497.0 503" fill="none" stroke="#b5b5b5" stroke-width="1.1"/></svg>
<div class="t" style="left:275px;top:471px;font-size:11.5px;line-height:20px;color:#2b807e;letter-spacing:0.130px;">Abteilung</div>
<div class="a" style="left:331px;top:514px;width:172px;height:21px;background:#fff;border:1px solid #c9c9c9;"></div>
<div class="a" style="left:331px;top:534px;width:172px;height:21px;background:#fff;border:1px solid #c9c9c9;"></div>
<div class="a" style="left:331px;top:554px;width:172px;height:21px;background:#fff;border:1px solid #c9c9c9;"></div>
<div class="t" style="left:217px;top:514px;font-size:11px;line-height:20px;color:#2b807e;letter-spacing:0.119px;">Titel im Unternehmen</div>
<div class="t" style="left:246px;top:534px;font-size:11px;line-height:20px;color:#2b807e;letter-spacing:-0.021px;">Anrede Adresse</div>
<div class="t" style="left:264.5px;top:554px;font-size:11px;line-height:20px;color:#2b807e;letter-spacing:0.099px;">Anrede Text</div>
<div class="t" style="left:337px;top:534px;font-size:11.5px;line-height:20px;color:#222;letter-spacing:-0.066px;">Herrn</div>
<div class="t" style="left:337px;top:554px;font-size:11px;line-height:20px;color:#222;letter-spacing:0.017px;">Sehr geehrter Herr</div>
<div class="a" style="left:331px;top:597px;width:172px;height:196px;background:#fff;border:1px solid #c9c9c9;"></div>
<div class="a" style="left:486px;top:598px;width:16px;height:194px;background:#f0f0f0;"></div>
<svg class="a" style="left:0px;top:0px" width="1" height="1" viewBox="0 0 1 1"><path d="M490.0 609 L493.5 605.2 L497.0 609" fill="none" stroke="#b5b5b5" stroke-width="1.1"/></svg>
<svg class="a" style="left:0px;top:0px" width="1" height="1" viewBox="0 0 1 1"><path d="M490.0 781 L493.5 784.8 L497.0 781" fill="none" stroke="#b5b5b5" stroke-width="1.1"/></svg>
<div class="t" style="left:267px;top:594px;font-size:11px;line-height:20px;color:#2b807e;letter-spacing:0.092px;">Bemerkung</div>
<div class="a" style="left:560px;top:485px;width:318px;height:21px;background:#317b78;"></div>
<div class="t" style="left:682.5px;top:486px;font-size:11px;line-height:20px;color:#fff;letter-spacing:0.053px;">Verteiler (0)</div>
<div class="t" style="left:1000.5px;top:485px;font-size:11px;line-height:20px;color:#2b807e;letter-spacing:0.127px;">Vorgänge (4)</div>
<div class="a" style="left:558px;top:505px;width:742px;height:1px;background:#317b78;"></div>
<div class="a" style="left:558px;top:505px;width:1px;height:288px;background:#317b78;"></div>
<div class="a" style="left:558px;top:792px;width:742px;height:1px;background:#317b78;"></div>
<div class="a" style="left:559px;top:506px;width:741px;height:27px;background:#e6f5f4;"></div>
<svg class="a" style="left:565px;top:513px" width="14" height="14" viewBox="0 0 14 14"><path d="M5 0 h4 v5 h5 v4 h-5 v5 h-4 v-5 h-5 v-4 h5 z" fill="#8d8d8d"/></svg>
<svg class="a" style="left:592px;top:514px" width="12" height="12" viewBox="0 0 12 12"><path d="M0.8 0.8 L11.2 11.2 M11.2 0.8 L0.8 11.2" stroke="#8d8d8d" stroke-width="1.8"/></svg>
<svg class="a" style="left:619px;top:513px" width="13" height="14" viewBox="0 0 13 14"><g fill="none" stroke="#8d8d8d" stroke-width="1"><path d="M9.5 3 V0.5 H0.5 V10.5 H3"/><rect x="3.5" y="3.5" width="9" height="10" fill="#e6f5f4"/><path d="M5.5 6.5 H10.5 M5.5 8.5 H10.5 M5.5 10.5 H10.5"/></g></svg>
<svg class="a" style="left:644px;top:513px" width="14" height="13" viewBox="0 0 14 13"><g fill="none" stroke="#8d8d8d" stroke-width="1.1"><circle cx="2.6" cy="3.4" r="2"/><circle cx="2.6" cy="9.6" r="2"/><path d="M4.3 4.4 L13.5 10.5 M4.3 8.6 L13.5 2.5"/></g></svg>
<svg class="a" style="left:671px;top:512px" width="14" height="15" viewBox="0 0 14 15"><rect x="0" y="1.6" width="8.8" height="11" rx="0.8" fill="#8d8d8d"/><rect x="2.4" y="0" width="4" height="3" rx="0.8" fill="#8d8d8d"/><rect x="5.8" y="5" width="7.4" height="9.4" fill="#fff" stroke="#8d8d8d" stroke-width="1"/><path d="M7.6 8.5 H11.4 M7.6 10.8 H11.4" stroke="#8d8d8d" stroke-width="1"/></svg>
<svg class="a" style="left:695px;top:513px" width="13" height="14" viewBox="0 0 13 14"><rect x="0" y="0" width="13" height="14" fill="#0e9a96"/><rect x="5" y="1.4" width="2.6" height="11.4" fill="#fff"/><rect x="9" y="1.4" width="2.7" height="11.4" fill="#fff"/></svg>
<svg class="a" style="left:0px;top:0px" width="1" height="1" viewBox="0 0 1 1"><path d="M714.4 518.2 h5.2 l-2.6 2.8 z" fill="#666"/></svg>
<svg class="a" style="left:728px;top:512px" width="16" height="14" viewBox="0 0 16 14"><rect x="0.5" y="2.8" width="4.5" height="10.7" fill="#fff" stroke="#8a8a8a" stroke-width="1"/><rect x="0" y="2.3" width="5.5" height="1.3" fill="#8a8a8a"/><rect x="0" y="13" width="8.8" height="0.9" fill="#8a8a8a"/><path d="M3.4 0 H12.6 L8.8 4.5 V7.5 L7.2 9 V4.5 Z" fill="#8a8a8a"/><path d="M10.2 9.3 L15 13.8 M15 9.3 L10.2 13.8" stroke="#ab9f9f" stroke-width="0.9"/></svg>
<svg class="a" style="left:755px;top:513px" width="14" height="15" viewBox="0 0 14 15"><path d="M2.6 2.6 H0.6 V14.1 H13.4 V2.6 H11.4" fill="none" stroke="#8d8d8d" stroke-width="1.2"/><path d="M7 -1.2 L9.8 1.6 H4.2 Z" fill="#8d8d8d"/><rect x="6" y="1.4" width="2" height="3.4" fill="#8d8d8d"/><path d="M3.8 6.6 L10.6 12.6 M10.6 6.6 L3.8 12.6" stroke="#8d8d8d" stroke-width="1.9"/></svg>
<svg class="a" style="left:780px;top:513px" width="13" height="14" viewBox="0 0 13 14"><rect x="0.5" y="0.7" width="11.7" height="11.6" fill="#fff" stroke="#0e9a96" stroke-width="1"/><rect x="0" y="0.2" width="12.7" height="2.7" fill="#0e9a96"/><rect x="4" y="5" width="8.7" height="9" fill="#0e9a96"/><rect x="5.5" y="7.2" width="2.1" height="5.6" fill="#fff"/><rect x="9.2" y="7.2" width="2.4" height="5.6" fill="#fff"/></svg>
<div class="a" style="left:802px;top:510px;width:20px;height:21px;background:#cdeff0;"></div>
<svg class="a" style="left:805px;top:513px" width="14" height="14" viewBox="0 0 14 14"><g fill="none" stroke="#0e9a96" stroke-width="1.2"><path d="M0.6 3.4 V0.6 H3.4"/><path d="M10.6 0.6 H13.4 V3.4"/><path d="M13.4 10.6 V13.4 H10.6"/><path d="M3.4 13.4 H0.6 V10.6"/></g><path d="M7.1 2.3 H12.2 V6.8 Z M2 7.1 V11.6 H6.8 Z" fill="#0a8783"/></svg>
<div class="a" style="left:833px;top:510px;width:160px;height:19px;background:#fff;"></div>
<div class="t" style="left:837px;top:509px;font-size:11px;line-height:20px;color:#000;letter-spacing:-0.049px;">Liste durchsuchen</div>
<svg class="a" style="left:0px;top:0px" width="1" height="1" viewBox="0 0 1 1"><line x1="980" y1="522.4" x2="976.2" y2="527.0" stroke="#157a78" stroke-width="2.6" stroke-linecap="round"/><circle cx="986" cy="517.4" r="5.8" fill="#f2f5fa" stroke="#666" stroke-width="1"/></svg>
<div class="a" style="left:559px;top:533px;width:741px;height:23px;background:#fff;"></div>
<div class="a" style="left:559px;top:556px;width:741px;height:1px;background:#000;"></div>
<div class="a" style="left:870px;top:533px;width:1px;height:24px;background:#000;"></div>
<div class="a" style="left:1271px;top:533px;width:1px;height:24px;background:#000;"></div>
<div class="t" style="left:563px;top:535px;font-size:11px;line-height:20px;color:#2f8583;letter-spacing:0.188px;">Liste</div>
<div class="t" style="left:875.5px;top:535px;font-size:11px;line-height:20px;color:#2f8583;letter-spacing:-0.143px;">Element</div>
<div class="t" style="left:1276.5px;top:535px;font-size:11px;line-height:20px;color:#2f8583;">Bemerkung</div>
<svg class="a" style="left:856.5px;top:540px" width="11" height="8" viewBox="0 0 11 8"><path d="M0.7 0.6 H10.1 L6.8 4.3 V7.6 H4 V4.3 Z" fill="none" stroke="#2f8583" stroke-width="1.1" stroke-linejoin="miter"/></svg>
<svg class="a" style="left:1257px;top:540px" width="11" height="8" viewBox="0 0 11 8"><path d="M0.7 0.6 H10.1 L6.8 4.3 V7.6 H4 V4.3 Z" fill="none" stroke="#2f8583" stroke-width="1.1" stroke-linejoin="miter"/></svg>
<div class="t" style="left:208.5px;top:827px;font-size:11px;line-height:20px;color:#2b807e;letter-spacing:-0.009px;">Weitere Daten</div>
<div class="a" style="left:209px;top:842px;width:69.5px;height:1px;background:#2b807e;"></div>
<div class="a" style="left:317px;top:858px;width:11px;height:11px;background:#f1f1f1;border:1px solid #b4b4b4;"></div>
<svg class="a" style="left:317px;top:858px" width="11" height="11" viewBox="0 0 11 11"><path d="M2.5 5.3 L4.6 8 L8.6 3" fill="none" stroke="#a2a2a2" stroke-width="1.8"/></svg>
<div class="t" style="left:335px;top:853px;font-size:11px;line-height:20px;color:#2b807e;letter-spacing:-0.098px;">Adresse des Unternehmens verwenden</div>
<div class="t" style="left:296px;top:876px;font-size:11px;line-height:20px;color:#2b807e;letter-spacing:-0.203px;">Straße</div>
<div class="a" style="left:334px;top:878px;width:689px;height:21px;background:#f0f0f0;border:1px solid #c6c6c6;"></div>
<div class="a" style="left:334px;top:898px;width:689px;height:21px;background:#f0f0f0;border:1px solid #c6c6c6;"></div>
<div class="t" style="left:337.5px;top:878px;font-size:11px;line-height:20px;color:#444;letter-spacing:0.081px;">Goethestraße 4</div>
<svg class="a" style="left:1004px;top:879px" width="17" height="18" viewBox="0 0 17 18"><g fill="#8e8e8e"><path d="M1 3 L3.7 1 V5 L1 7 Z"/><path d="M1 8.6 L3.7 6.6 V10 L1 12 Z"/><path d="M5 1 L7.7 3 V7 L5 5 Z"/><path d="M5 6.6 L7.7 8.6 V12 L5 10 Z"/><path d="M9.2 3 L12 1 V5 L9.2 7 Z"/><path d="M9.2 8.6 L12 6.6 V10 L9.2 12 Z"/><rect x="8.2" y="13.3" width="5.5" height="1.5"/><path d="M13 11.4 L16.4 14 L13 16.8 Z"/></g></svg>
<div class="t" style="left:1104px;top:853px;font-size:11px;line-height:20px;color:#2b807e;letter-spacing:0.117px;">Geburtsdatum</div>
<div class="a" style="left:1182px;top:853px;width:78px;height:21px;background:#fff;border:1px solid #c9c9c9;"></div>
<div class="t" style="left:1186px;top:853px;font-size:11px;line-height:20px;color:#222;letter-spacing:-0.650px;">k.A.</div>
<div class="a" style="left:1182px;top:893px;width:119px;height:21px;background:#fff;border:1px solid #c9c9c9;"></div>
<div class="t" style="left:1143.5px;top:893px;font-size:11px;line-height:20px;color:#2b807e;letter-spacing:-0.059px;">Quelle</div>
<div class="t" style="left:1186px;top:893px;font-size:12px;line-height:20px;color:#222;">elektronisch erfasst</div>
<div class="a" style="left:509px;top:286px;width:242px;height:196px;background:rgba(0,0,0,0.18);filter:blur(1.5px);"></div>
<div class="a" style="left:507px;top:284px;width:242px;height:196px;background:#fcfcfc;border:1px solid #a0a0a0;"></div>
<div class="a" style="left:508px;top:285px;width:23px;height:194px;background:#f0f0f0;"></div>
<div class="a" style="left:507px;top:429px;width:239px;height:27px;background:#b5d7f3;border:3px solid #ff0000;"></div>
<div class="t" style="left:538.5px;top:287px;font-size:11px;line-height:20px;color:#111;letter-spacing:0.007px;">E-Mail versenden</div>
<svg class="a" style="left:0px;top:0px" width="1" height="1" viewBox="0 0 1 1"><path d="M736 294 L740 298 L736 302 Z" fill="#111"/></svg>
<div class="t" style="left:538.5px;top:311px;font-size:11px;line-height:20px;color:#111;letter-spacing:-0.005px;">Anrufen</div>
<svg class="a" style="left:0px;top:0px" width="1" height="1" viewBox="0 0 1 1"><path d="M736 318 L740 322 L736 326 Z" fill="#111"/></svg>
<div class="t" style="left:538.5px;top:335px;font-size:11px;line-height:20px;color:#111;letter-spacing:0.001px;">Zwischenablage</div>
<svg class="a" style="left:0px;top:0px" width="1" height="1" viewBox="0 0 1 1"><path d="M736 342 L740 346 L736 350 Z" fill="#111"/></svg>
<div class="t" style="left:538.5px;top:359px;font-size:11.5px;line-height:20px;color:#111;letter-spacing:-0.122px;">Word-Brief schreiben</div>
<svg class="a" style="left:0px;top:0px" width="1" height="1" viewBox="0 0 1 1"><path d="M736 366 L740 370 L736 374 Z" fill="#111"/></svg>
<div class="t" style="left:538.5px;top:383px;font-size:11px;line-height:20px;color:#111;letter-spacing:0.020px;">Schnelleingabe Kontakt</div>
<svg class="a" style="left:0px;top:0px" width="1" height="1" viewBox="0 0 1 1"><path d="M736 390 L740 394 L736 398 Z" fill="#111"/></svg>
<div class="t" style="left:538.5px;top:407px;font-size:11px;line-height:20px;color:#111;letter-spacing:0.079px;">Schnelleingabe Aktivität</div>
<div class="t" style="left:538.5px;top:431px;font-size:11px;line-height:20px;color:#111;letter-spacing:-0.026px;">Anzeigen in Optimal Systems</div>
<div class="t" style="left:538.5px;top:455px;font-size:11px;line-height:20px;color:#111;letter-spacing:0.006px;">Mehrfachzuordnung von Freien Listen</div>
</body></html>
